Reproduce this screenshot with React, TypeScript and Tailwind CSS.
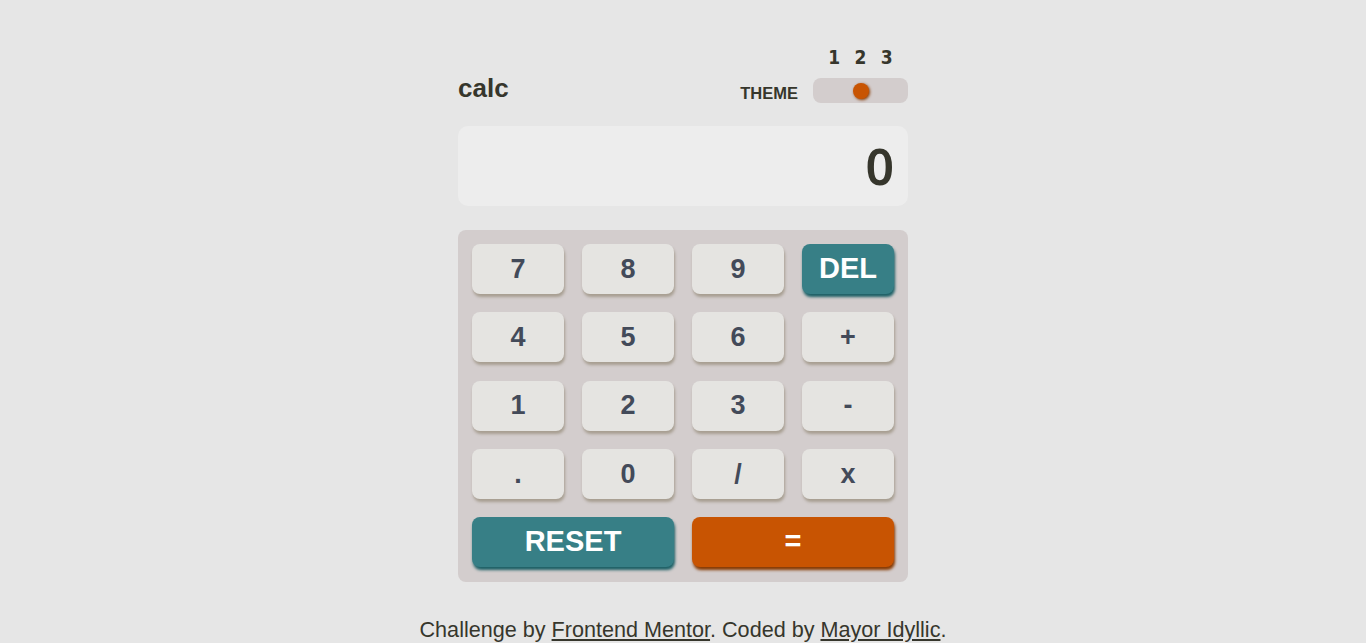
import React from 'react'

const keys: Array<{ label: string; kind?: 'del' }> = [
  { label: '7' }, { label: '8' }, { label: '9' }, { label: 'DEL', kind: 'del' },
  { label: '4' }, { label: '5' }, { label: '6' }, { label: '+' },
  { label: '1' }, { label: '2' }, { label: '3' }, { label: '-' },
  { label: '.' }, { label: '0' }, { label: '/' }, { label: 'x' },
]

export default function App() {
  return (
    <div className="min-h-[643px] bg-[#e6e6e6] font-[family-name:Liberation_Sans,Arial,sans-serif]">
      <main className="mx-auto w-[450px] pt-[46px]">
        <header className="flex items-end justify-between">
          <h1 className="mb-[2px] text-[26px] font-bold leading-none text-[#36362c]">calc</h1>
          <div className="flex items-end">
            <span className="mb-[2px] mr-[15px] text-[16.5px] font-bold leading-none text-[#36362c]">THEME</span>
            <div className="flex flex-col">
              <div className="flex justify-around px-[8px] font-[family-name:DejaVu_Sans_Condensed,DejaVu_Sans,sans-serif] text-[19px] font-bold leading-[22px] text-[#36362c]">
                <span>1</span>
                <span>2</span>
                <span>3</span>
              </div>
              <div className="mt-[10px] flex h-[25px] w-[95px] items-center justify-center rounded-[8px] bg-[#d3cdcd]">
                <span className="h-[16px] w-[16px] rounded-full bg-[#c85402] shadow-[1px_1px_3px_#873901]" />
              </div>
            </div>
          </div>
        </header>

        <div className="mt-[23px] flex h-[80px] items-center justify-end rounded-[10px] bg-[#ededed] px-[14px]">
          <span className="font-[family-name:Noto_Sans,sans-serif] text-[50px] font-semibold leading-none text-[#36362c]">0</span>
        </div>

        <div className="mt-[24px] rounded-[8px] bg-[#d3cdcd] px-[14px] pb-[15px] pt-[14px]">
          <div className="grid grid-cols-4 gap-x-[18px] gap-y-[18.25px]">
            {keys.map((key) =>
              key.kind === 'del' ? (
                <button
                  key={key.label}
                  className="flex h-[50px] items-center justify-center rounded-[8px] bg-[#377f86] text-[29px] font-bold text-white shadow-[1px_3px_3px_#1b5f65]"
                >
                  {key.label}
                </button>
              ) : (
                <button
                  key={key.label}
                  className="flex h-[50px] items-center justify-center rounded-[8px] bg-[#e5e4e1] text-[27px] font-bold text-[#434a59] shadow-[1px_3px_3px_#a79e91]"
                >
                  {key.label}
                </button>
              )
            )}
            <button className="col-span-2 flex h-[50px] items-center justify-center rounded-[8px] bg-[#377f86] text-[29px] font-bold text-white shadow-[1px_3px_3px_#1b5f65]">
              RESET
            </button>
            <button className="col-span-2 flex h-[50px] items-center justify-center rounded-[8px] bg-[#c85402] text-[29px] font-bold text-white shadow-[1px_3px_3px_#873901]">
              =
            </button>
          </div>
        </div>
      </main>
      <footer className="mt-[35px] text-center text-[21.6px] leading-[26px] text-[#36362c]">
        Challenge by <a className="underline">Frontend Mentor</a>. Coded by <a className="underline">Mayor Idyllic</a>.
      </footer>
    </div>
  )
}
